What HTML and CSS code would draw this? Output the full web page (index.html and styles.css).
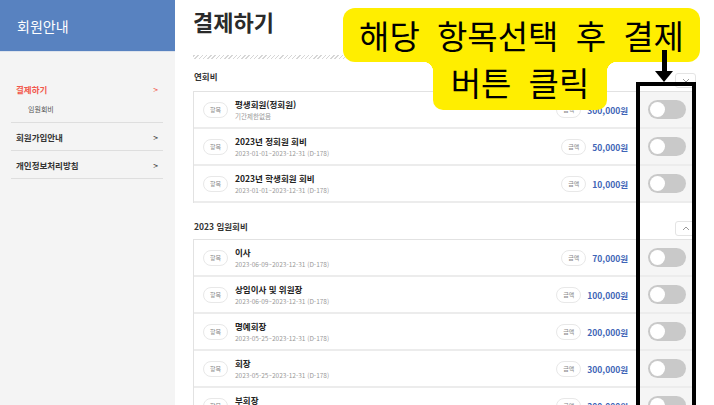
FILE: index.html
```html
<!DOCTYPE html>
<html lang="ko">
  <head>
    <meta charset="utf-8">
    <title>결제하기</title>
    <link rel="stylesheet" href="styles.css">
  </head>
  <body>
    <aside class="side">
      <div class="side-head">회원안내</div>
      <ul class="side-nav">
        <li class="side-item is-open">
          <a class="side-link is-active">결제하기 <span>&gt;</span></a>
          <a class="side-sub">임원회비</a>
        </li>
        <li class="side-item"><a class="side-link">회원가입안내 <span>&gt;</span></a></li>
        <li class="side-item"><a class="side-link">개인정보처리방침 <span>&gt;</span></a></li>
      </ul>
    </aside>

    <main class="main">
      <h1 class="page-title">결제하기</h1>
      <div class="hatch"></div>

      <div class="group-head">
        <h2>연회비</h2>
        <button class="fold"><svg width="8" height="5" viewBox="0 0 8 5"><polyline points="1,1 4,4 7,1" fill="none" stroke="#999" stroke-width="1"/></svg></button>
      </div>
      <div class="list">
        <div class="row">
          <span class="tag">항목</span>
          <div class="row-info"><div class="row-name">평생회원(정회원)</div><div class="row-date">기간제한없음</div></div>
          <div class="amount"><span class="tag">금액</span><span class="price">300,000원</span></div>
          <div class="switch-cell"><span class="switch"></span></div>
        </div>
        <div class="row">
          <span class="tag">항목</span>
          <div class="row-info"><div class="row-name">2023년 정회원 회비</div><div class="row-date">2023-01-01~2023-12-31 (D-178)</div></div>
          <div class="amount"><span class="tag">금액</span><span class="price">50,000원</span></div>
          <div class="switch-cell"><span class="switch"></span></div>
        </div>
        <div class="row">
          <span class="tag">항목</span>
          <div class="row-info"><div class="row-name">2023년 학생회원 회비</div><div class="row-date">2023-01-01~2023-12-31 (D-178)</div></div>
          <div class="amount"><span class="tag">금액</span><span class="price">10,000원</span></div>
          <div class="switch-cell"><span class="switch"></span></div>
        </div>
      </div>

      <div class="group-head group-next">
        <h2>2023 임원회비</h2>
        <button class="fold"><svg width="8" height="5" viewBox="0 0 8 5"><polyline points="1,4 4,1 7,4" fill="none" stroke="#999" stroke-width="1"/></svg></button>
      </div>
      <div class="list">
        <div class="row">
          <span class="tag">항목</span>
          <div class="row-info"><div class="row-name">이사</div><div class="row-date">2023-06-09~2023-12-31 (D-178)</div></div>
          <div class="amount"><span class="tag">금액</span><span class="price">70,000원</span></div>
          <div class="switch-cell"><span class="switch"></span></div>
        </div>
        <div class="row">
          <span class="tag">항목</span>
          <div class="row-info"><div class="row-name">상임이사 및 위원장</div><div class="row-date">2023-06-09~2023-12-31 (D-178)</div></div>
          <div class="amount"><span class="tag">금액</span><span class="price">100,000원</span></div>
          <div class="switch-cell"><span class="switch"></span></div>
        </div>
        <div class="row">
          <span class="tag">항목</span>
          <div class="row-info"><div class="row-name">명예회장</div><div class="row-date">2023-05-25~2023-12-31 (D-178)</div></div>
          <div class="amount"><span class="tag">금액</span><span class="price">200,000원</span></div>
          <div class="switch-cell"><span class="switch"></span></div>
        </div>
        <div class="row">
          <span class="tag">항목</span>
          <div class="row-info"><div class="row-name">회장</div><div class="row-date">2023-05-25~2023-12-31 (D-178)</div></div>
          <div class="amount"><span class="tag">금액</span><span class="price">300,000원</span></div>
          <div class="switch-cell"><span class="switch"></span></div>
        </div>
        <div class="row">
          <span class="tag">항목</span>
          <div class="row-info"><div class="row-name">부회장</div><div class="row-date">2023-05-25~2023-12-31 (D-178)</div></div>
          <div class="amount"><span class="tag">금액</span><span class="price">300,000원</span></div>
          <div class="switch-cell"><span class="switch"></span></div>
        </div>
      </div>
    </main>

    <!-- annotation drawn over the page -->
    <div class="callout">
      <div class="callout-top">해당 항목선택 후 결제</div>
      <div class="callout-bottom">버튼 클릭</div>
    </div>
    <svg class="arrow" width="18" height="32" viewBox="0 0 18 32">
      <rect x="7" y="0" width="5" height="23" fill="#000"/>
      <polygon points="0,21 18,21 9,32" fill="#000"/>
    </svg>
    <div class="frame"></div>
  </body>
</html>
```

FILE: styles.css
```css
html, body {
    margin: 0;
    padding: 0;
}

body {
    position: relative;
    display: flex;
    width: 714px;
    height: 405px;
    overflow: hidden;
    font-family: 'Noto Sans CJK KR', 'Noto Sans', sans-serif;
    color: #222;
    background: white;
}

/* sidebar */
.side {
    width: 175px;
    flex: none;
    background: #f4f4f4;
}
.side-head {
    height: 51px;
    display: flex;
    align-items: center;
    padding-left: 17px;
    background: #5882c0;
    border-bottom: 1px solid #dde3ec;
    color: white;
    font-size: 14px;
}
.side-nav {
    list-style: none;
    margin: 0 12px 0 11px;
    padding: 27px 0 0;
}
.side-item {
    border-bottom: 1px solid #dedede;
}
.side-item.is-open {
    padding-bottom: 3px;
}
.side-link {
    display: flex;
    justify-content: space-between;
    align-items: center;
    height: 27px;
    padding: 0 5px;
    font-size: 8.5px;
    font-weight: 700;
    color: #333;
}
.side-link span {
    font-weight: 400;
}
.side-link.is-active {
    height: 20px;
    color: #f2574b;
}
.side-sub {
    display: block;
    height: 20px;
    line-height: 20px;
    padding-left: 17px;
    font-size: 7px;
    color: #555;
}

/* main */
.main {
    flex: 1;
    padding: 0 18px;
}
.page-title {
    margin: 0;
    height: 55px;
    line-height: 42px;
    font-size: 22px;
    font-weight: 700;
    color: #2a2a2a;
}
.hatch {
    height: 4px;
    background: repeating-linear-gradient(-45deg, #d6d6d6 0 1px, transparent 1px 3px);
}

.group-head {
    display: flex;
    justify-content: space-between;
    align-items: flex-end;
    height: 32px;
}
.group-head h2 {
    margin: 0 0 9px 1px;
    font-size: 8.5px;
    line-height: 12px;
    font-weight: 700;
    color: #333;
}
.group-next {
    height: 36px;
}
.group-next h2 {
    margin-bottom: 7px;
}
.fold {
    width: 21px;
    height: 15px;
    margin: 0 0 3px;
    padding: 0;
    display: flex;
    align-items: center;
    justify-content: center;
    background: white;
    border: 1px solid #e4e4e4;
    border-radius: 3px;
}

.list {
    border: 1px solid #e2e2e2;
    border-bottom: 0;
}
.row {
    display: flex;
    align-items: center;
    height: 37px;
    box-sizing: border-box;
    border-bottom: 2px solid #ececec;
}
.tag {
    flex: none;
    display: flex;
    align-items: center;
    justify-content: center;
    width: 25px;
    height: 16px;
    box-sizing: border-box;
    border: 1px solid #e8e8e8;
    border-radius: 8px;
    background: white;
    font-size: 6px;
    color: #888;
}
.row > .tag {
    margin-left: 9px;
}
.row-info {
    flex: 1;
    margin-left: 7px;
}
.row-name {
    font-size: 8.5px;
    line-height: 11px;
    font-weight: 700;
    color: #222;
}
.row-date {
    margin-top: 2px;
    font-size: 6.5px;
    line-height: 9px;
    color: #999;
}
.amount {
    display: flex;
    align-items: center;
    gap: 6px;
    padding-right: 11px;
}
.price {
    font-size: 8.5px;
    font-weight: 700;
    color: #3e64b6;
}
.switch-cell {
    width: 56px;
    height: 100%;
    flex: none;
    display: flex;
    align-items: center;
    justify-content: center;
    background: #f5f5f5;
}
.switch {
    position: relative;
    width: 38px;
    height: 19px;
    border-radius: 10px;
    background: #c9c9c9;
}
.switch::before {
    content: '';
    position: absolute;
    left: 2px;
    top: 2px;
    width: 15px;
    height: 15px;
    border-radius: 50%;
    background: white;
}

/* annotation */
.callout {
    position: absolute;
    left: 343px;
    top: 8px;
    width: 357px;
    color: #000;
    font-size: 33px;
    text-align: center;
    word-spacing: 8px;
}
.callout-top {
    height: 54px;
    line-height: 54px;
    border-radius: 12px;
    background: #ffee00;
}
.callout-bottom {
    position: relative;
    width: 174px;
    height: 48px;
    line-height: 40px;
    margin-left: 90px;
    border-radius: 0 0 10px 10px;
    background: #ffee00;
}
.callout-bottom::before,
.callout-bottom::after {
    content: '';
    position: absolute;
    top: 0;
    width: 10px;
    height: 10px;
}
.callout-bottom::before {
    left: -10px;
    background: radial-gradient(circle at 0 100%, transparent 10px, #ffee00 10.5px);
}
.callout-bottom::after {
    right: -10px;
    background: radial-gradient(circle at 100% 100%, transparent 10px, #ffee00 10.5px);
}
.arrow {
    position: absolute;
    left: 655px;
    top: 50px;
}
.frame {
    position: absolute;
    left: 636px;
    top: 82px;
    width: 60px;
    height: 340px;
    box-sizing: border-box;
    border: 4px solid #000;
}
```
